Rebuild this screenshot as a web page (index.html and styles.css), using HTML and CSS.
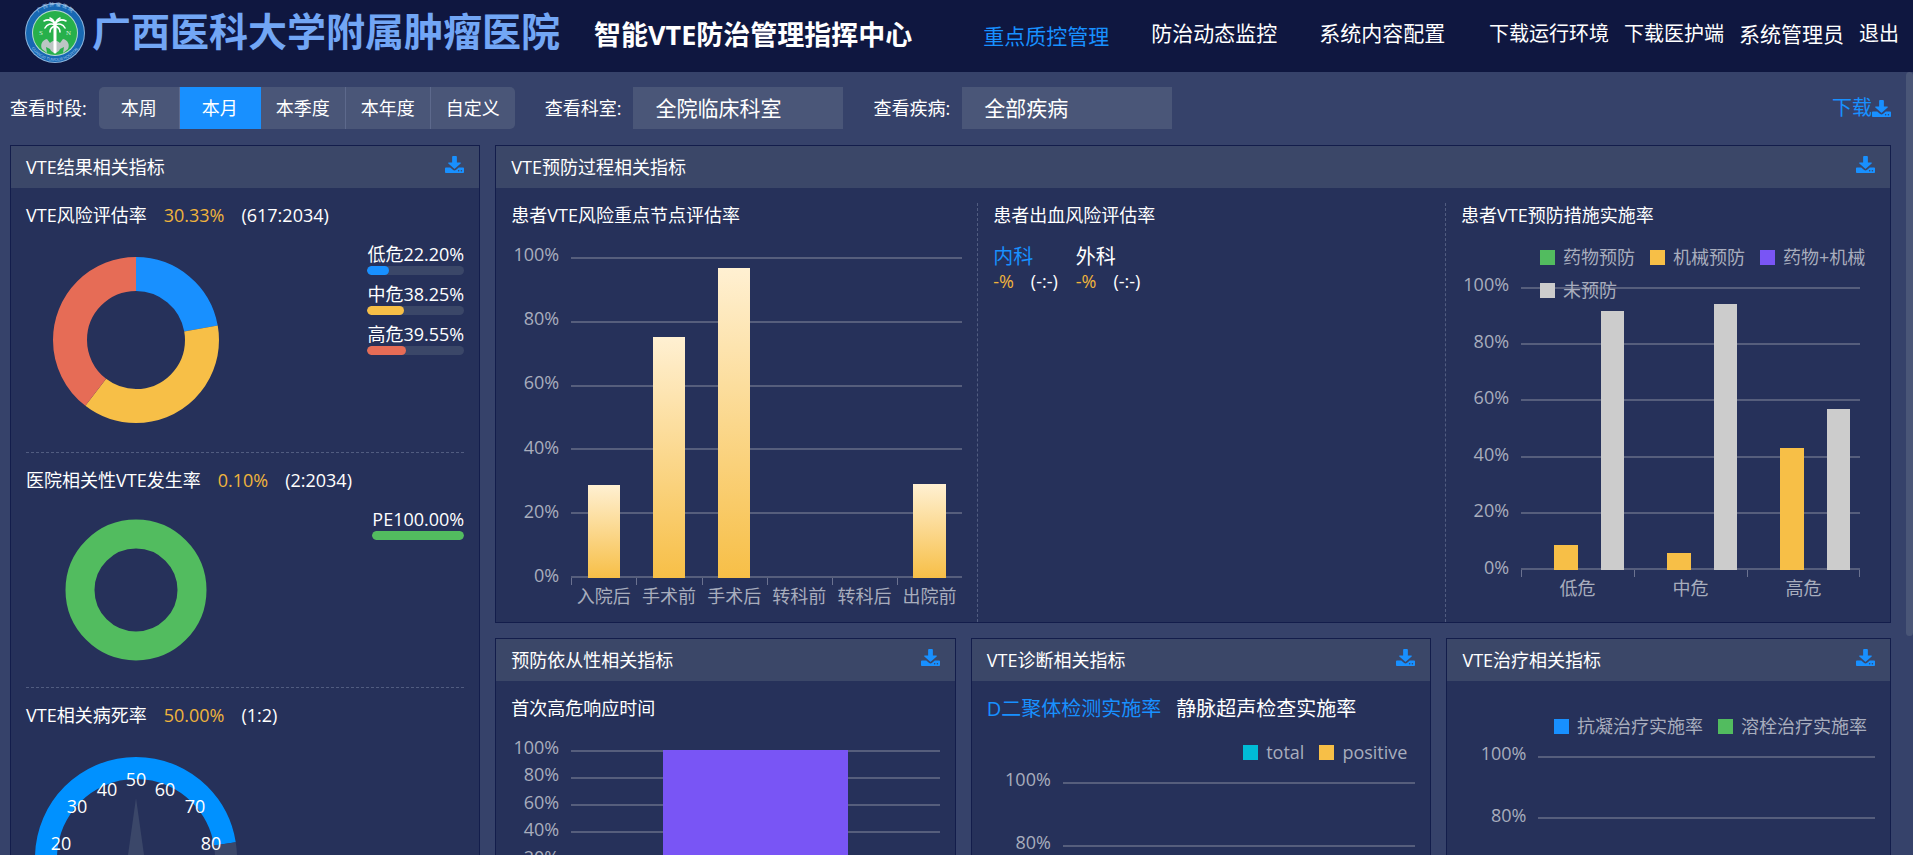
FILE: index.html
```html
<!DOCTYPE html>
<html lang="zh-CN">
<head>
    <meta charset="UTF-8">
    <meta name="viewport" content="width=device-width, initial-scale=1.0">
    <title>智能VTE防治管理指挥中心</title>
    <link rel="stylesheet" href="styles.css">
</head>
<body>
    <svg class="defs" aria-hidden="true">
        <symbol id="icon-download" viewBox="0 0 512 512" preserveAspectRatio="none">
            <path d="M216 0h80c13.300 0 24 10.700 24 24v168h87.700c17.800 0 26.700 21.500 14.100 34.100L269.700 378.300c-7.500 7.500-19.800 7.500-27.300 0L90.100 226.100c-12.600-12.600-3.700-34.100 14.100-34.100H192V24c0-13.300 10.700-24 24-24zm296 346v142c0 13.300-10.700 24-24 24H24c-13.300 0-24-10.700-24-24V370c0-13.300 10.700-24 24-24h116.700l79 79c20.100 20.100 52.500 20.100 72.600 0l79-79H488c13.300 0 24 10.700 24 24zm-124 98c0-11-9-20-20-20s-20 9-20 20 9 20 20 20 20-9 20-20zm74 0c0-11-9-20-20-20s-20 9-20 20 9 20 20 20 20-9 20-20z"/>
        </symbol>
    </svg>

    <header class="header">
        <div class="brand">
            <svg class="logo" viewBox="0 0 60 60" aria-hidden="true">
                <circle cx="30" cy="30" r="30" fill="#8cb4dc"/>
                <circle cx="30" cy="30" r="29" fill="#1768b3"/>
                <circle cx="30" cy="30" r="23" fill="#b9dcd0"/>
                <circle cx="30" cy="30" r="22" fill="#27b04b"/>
                <path id="ring-top" d="M6 27a24 24 0 0 1 48 0" fill="none"/>
                <path id="ring-bottom" d="M2 30a28 28 0 0 0 56 0" fill="none"/>
                <text class="ring-text" text-anchor="middle"><textPath href="#ring-top" startOffset="50%">广 西 肿 瘤 医 院</textPath></text>
                <text class="ring-text small" text-anchor="middle"><textPath href="#ring-bottom" startOffset="50%">GUANGXI TUMOUR HOSPITAL</textPath></text>
                <path d="M22 36c-5 1-7 6-5 10l5 4-1-6 4 2c2 5 8 5 10 0l4-2-1 6 5-4c2-4 0-9-5-10l-3 4c-3-3-7-3-10 0z" fill="#bcc6c4"/>
                <g fill="none" stroke="#fff" stroke-linecap="round">
                    <path d="M30 20v29" stroke-width="3"/>
                    <path d="M30 21c-3-4-7-5-11-3M30 21c3-4 7-5 11-3M30 22c-4-2-8-1-10 3M30 22c4-2 8-1 10 3M30 21c-1-3-2-5-5-6M30 21c1-3 2-5 5-6M30 23c-3 1-5 3-5 6M30 23c3 1 5 3 5 6" stroke-width="1.6"/>
                </g>
                <text class="logo-mark" x="14" y="32">S</text>
                <text class="logo-mark" x="41" y="32">N</text>
            </svg>
            <span class="hospital">广西医科大学附属肿瘤医院</span>
        </div>
        <h1 class="system-name">智能VTE防治管理指挥中心</h1>
        <nav class="nav">
            <a href="#" class="active">重点质控管理</a>
            <a href="#">防治动态监控</a>
            <a href="#">系统内容配置</a>
        </nav>
        <div class="user-links">
            <a href="#">下载运行环境</a>
            <a href="#">下载医护端</a>
            <a href="#" class="user">系统管理员</a>
            <a href="#">退出</a>
        </div>
    </header>

    <div class="page">
        <main class="content">
            <div class="toolbar">
                <span class="label">查看时段:</span>
                <div class="periods">
                    <button type="button">本周</button>
                    <button type="button" class="active">本月</button>
                    <button type="button">本季度</button>
                    <button type="button">本年度</button>
                    <button type="button">自定义</button>
                </div>
                <label class="label" for="dept">查看科室:</label>
                <select id="dept"><option>全院临床科室</option></select>
                <label class="label" for="disease">查看疾病:</label>
                <select id="disease"><option>全部疾病</option></select>
                <a href="#" class="download-all">下载<svg class="icon" aria-hidden="true"><use href="#icon-download"/></svg></a>
            </div>

            <div class="board">
                <section class="panel">
                    <div class="panel-head">
                        <h2>VTE结果相关指标</h2>
                        <button type="button" class="download" aria-label="下载"><svg class="icon"><use href="#icon-download"/></svg></button>
                    </div>
                    <div class="panel-body">
                        <div class="result">
                            <h3>VTE风险评估率<span class="rate">30.33%</span><span>(617:2034)</span></h3>
                            <div class="result-row">
                                <div class="figure">
                                    <svg width="166" height="166" viewBox="-83 -83 166 166">
                                        <g fill="none" stroke-width="34" transform="rotate(-90)">
                                            <circle r="66" pathLength="100" stroke="#1890ff" stroke-dasharray="22.2 77.8"/>
                                            <circle r="66" pathLength="100" stroke="#f7bf47" stroke-dasharray="38.25 61.75" stroke-dashoffset="-22.2"/>
                                            <circle r="66" pathLength="100" stroke="#e66c56" stroke-dasharray="39.55 60.45" stroke-dashoffset="-60.45"/>
                                        </g>
                                    </svg>
                                </div>
                                <ul class="shares">
                                    <li>低危22.20%<div class="track"><div class="fill blue" style="width: 22.2%"></div></div></li>
                                    <li>中危38.25%<div class="track"><div class="fill yellow" style="width: 38.25%"></div></div></li>
                                    <li>高危39.55%<div class="track"><div class="fill red" style="width: 39.55%"></div></div></li>
                                </ul>
                            </div>
                        </div>
                        <div class="result">
                            <h3>医院相关性VTE发生率<span class="rate">0.10%</span><span>(2:2034)</span></h3>
                            <div class="result-row short">
                                <div class="figure">
                                    <svg width="142" height="142" viewBox="-71 -71 142 142">
                                        <circle r="56" fill="none" stroke="#52bc5f" stroke-width="29"/>
                                    </svg>
                                </div>
                                <ul class="shares">
                                    <li>PE100.00%<div class="track"><div class="fill green" style="width: 100%"></div></div></li>
                                </ul>
                            </div>
                        </div>
                        <div class="result">
                            <h3>VTE相关病死率<span class="rate">50.00%</span><span>(1:2)</span></h3>
                            <div class="result-row tall">
                                <div class="figure">
                                    <svg width="204" height="204" viewBox="-102 -102 204 204">
                                        <g fill="none" stroke-width="22" transform="rotate(135)">
                                            <circle r="90" pathLength="360" stroke="#0091ff" stroke-dasharray="216 144"/>
                                            <circle r="90" pathLength="360" stroke="#3b4769" stroke-dasharray="54 306" stroke-dashoffset="-216"/>
                                        </g>
                                        <path d="M0-60L9 4 0 12-9 4z" fill="#3b4769"/>
                                        <g class="gauge-text">
                                            <text x="-54" y="62">0</text>
                                            <text x="-72" y="30">10</text>
                                            <text x="-75" y="-8">20</text>
                                            <text x="-59" y="-45">30</text>
                                            <text x="-29" y="-62">40</text>
                                            <text x="0" y="-72">50</text>
                                            <text x="29" y="-62">60</text>
                                            <text x="59" y="-45">70</text>
                                            <text x="75" y="-8">80</text>
                                            <text x="72" y="30">90</text>
                                            <text x="54" y="62">100</text>
                                        </g>
                                    </svg>
                                </div>
                            </div>
                        </div>
                    </div>
                </section>

                <div class="side">
                    <section class="panel">
                        <div class="panel-head">
                            <h2>VTE预防过程相关指标</h2>
                            <button type="button" class="download" aria-label="下载"><svg class="icon"><use href="#icon-download"/></svg></button>
                        </div>
                        <div class="panel-body process">
                            <div class="col">
                                <h3>患者VTE风险重点节点评估率</h3>
                                <div class="chart nodes">
                                    <div class="y-axis"><span>100%</span><span>80%</span><span>60%</span><span>40%</span><span>20%</span><span>0%</span></div>
                                    <div class="plot">
                                        <div class="lines"><i></i><i></i><i></i><i></i><i></i><i></i></div>
                                        <div class="bars">
                                            <div class="group"><div class="bar amber" style="height: 29%"></div></div>
                                            <div class="group"><div class="bar amber" style="height: 75%"></div></div>
                                            <div class="group"><div class="bar amber" style="height: 96.5%"></div></div>
                                            <div class="group"><div class="bar amber" style="height: 0%"></div></div>
                                            <div class="group"><div class="bar amber" style="height: 0%"></div></div>
                                            <div class="group"><div class="bar amber" style="height: 29.3%"></div></div>
                                        </div>
                                    </div>
                                    <ul class="x-axis"><li>入院后</li><li>手术前</li><li>手术后</li><li>转科前</li><li>转科后</li><li>出院前</li></ul>
                                </div>
                            </div>
                            <div class="col">
                                <h3>患者出血风险评估率</h3>
                                <div class="bleeding">
                                    <div>
                                        <a href="#" class="tab active">内科</a>
                                        <p><span class="rate">-%</span><span>(-:-)</span></p>
                                    </div>
                                    <div>
                                        <a href="#" class="tab">外科</a>
                                        <p><span class="rate">-%</span><span>(-:-)</span></p>
                                    </div>
                                </div>
                            </div>
                            <div class="col">
                                <h3>患者VTE预防措施实施率</h3>
                                <div class="chart measures">
                                    <ul class="legend over">
                                        <li><i class="green"></i>药物预防</li>
                                        <li><i class="yellow"></i>机械预防</li>
                                        <li><i class="purple"></i>药物+机械</li>
                                        <li><i class="grey"></i>未预防</li>
                                    </ul>
                                    <div class="y-axis"><span>100%</span><span>80%</span><span>60%</span><span>40%</span><span>20%</span><span>0%</span></div>
                                    <div class="plot">
                                        <div class="lines"><i></i><i></i><i></i><i></i><i></i><i></i></div>
                                        <div class="bars">
                                            <div class="group">
                                                <div class="bar green" style="height: 0%"></div>
                                                <div class="bar yellow" style="height: 9%"></div>
                                                <div class="bar purple" style="height: 0%"></div>
                                                <div class="bar grey" style="height: 91.5%"></div>
                                            </div>
                                            <div class="group">
                                                <div class="bar green" style="height: 0%"></div>
                                                <div class="bar yellow" style="height: 6%"></div>
                                                <div class="bar purple" style="height: 0%"></div>
                                                <div class="bar grey" style="height: 94%"></div>
                                            </div>
                                            <div class="group">
                                                <div class="bar green" style="height: 0%"></div>
                                                <div class="bar yellow" style="height: 43%"></div>
                                                <div class="bar purple" style="height: 0%"></div>
                                                <div class="bar grey" style="height: 57%"></div>
                                            </div>
                                        </div>
                                    </div>
                                    <ul class="x-axis"><li>低危</li><li>中危</li><li>高危</li></ul>
                                </div>
                            </div>
                        </div>
                    </section>

                    <div class="bottom">
                        <section class="panel">
                            <div class="panel-head">
                                <h2>预防依从性相关指标</h2>
                                <button type="button" class="download" aria-label="下载"><svg class="icon"><use href="#icon-download"/></svg></button>
                            </div>
                            <div class="panel-body">
                                <h3>首次高危响应时间</h3>
                                <div class="chart response">
                                    <div class="y-axis"><span>100%</span><span>80%</span><span>60%</span><span>40%</span><span>20%</span><span>0%</span></div>
                                    <div class="plot">
                                        <div class="lines"><i></i><i></i><i></i><i></i><i></i><i></i></div>
                                        <div class="bars"><div class="group"><div class="bar purple" style="height: 100%"></div></div></div>
                                    </div>
                                </div>
                            </div>
                        </section>
                        <section class="panel">
                            <div class="panel-head">
                                <h2>VTE诊断相关指标</h2>
                                <button type="button" class="download" aria-label="下载"><svg class="icon"><use href="#icon-download"/></svg></button>
                            </div>
                            <div class="panel-body">
                                <div class="tabs">
                                    <a href="#" class="tab active">D二聚体检测实施率</a>
                                    <a href="#" class="tab">静脉超声检查实施率</a>
                                </div>
                                <ul class="legend">
                                    <li><i class="cyan"></i>total</li>
                                    <li><i class="yellow"></i>positive</li>
                                </ul>
                                <div class="chart indent">
                                    <div class="y-axis"><span>100%</span><span>80%</span><span>60%</span><span>40%</span><span>20%</span><span>0%</span></div>
                                    <div class="plot"><div class="lines"><i></i><i></i><i></i><i></i><i></i><i></i></div></div>
                                </div>
                            </div>
                        </section>
                        <section class="panel">
                            <div class="panel-head">
                                <h2>VTE治疗相关指标</h2>
                                <button type="button" class="download" aria-label="下载"><svg class="icon"><use href="#icon-download"/></svg></button>
                            </div>
                            <div class="panel-body">
                                <ul class="legend">
                                    <li><i class="blue"></i>抗凝治疗实施率</li>
                                    <li><i class="green"></i>溶栓治疗实施率</li>
                                </ul>
                                <div class="chart indent treatment">
                                    <div class="y-axis"><span>100%</span><span>80%</span><span>60%</span><span>40%</span><span>20%</span><span>0%</span></div>
                                    <div class="plot"><div class="lines"><i></i><i></i><i></i><i></i><i></i><i></i></div></div>
                                </div>
                            </div>
                        </section>
                    </div>
                </div>
            </div>
        </main>
        <div class="scrollbar" aria-hidden="true"><div class="thumb"></div></div>
    </div>
</body>
</html>
```
FILE: styles.css
```css
* {
    box-sizing: border-box;
}

body {
    display: flex;
    flex-direction: column;
    height: 100vh;
    margin: 0;
    overflow: hidden;
    font-family: "Open Sans", "Noto Sans CJK SC", sans-serif;
    font-size: 18px;
    line-height: 26px;
    color: #fff;
    background-color: #36426a;
}

h1, h2, h3, p, ul {
    margin: 0;
    padding: 0;
    font-size: inherit;
    font-weight: normal;
    list-style: none;
}

h3 {
    padding-bottom: 2px;
    line-height: 24px;
}

a {
    color: inherit;
    text-decoration: none;
}

button, select {
    font: inherit;
    color: inherit;
    border: none;
    cursor: pointer;
}

.defs {
    display: none;
}

.icon {
    display: block;
    width: 19px;
    height: 17px;
    fill: #1890ff;
}

/* header */
.header {
    display: flex;
    align-items: center;
    flex: none;
    height: 72px;
    padding: 0 14px 0 25px;
    background-color: #0f1740;
    white-space: nowrap;
}

.brand {
    display: flex;
    align-items: center;
    gap: 7px;
    padding-bottom: 6px;
}

.logo {
    width: 60px;
    height: 60px;
    overflow: visible;
}

.ring-text {
    font-size: 5px;
    fill: #a9cdf0;
}

.ring-text.small {
    font-size: 4px;
}

.logo-mark {
    font-family: "Liberation Serif", serif;
    font-size: 7px;
    fill: #d3efd9;
}

.hospital {
    padding-bottom: 4px;
    font-size: 39px;
    line-height: 56px;
    font-weight: bold;
    color: #72a6f5;
}

.system-name {
    margin-left: 34px;
    padding-bottom: 2px;
    font-size: 27px;
    line-height: 40px;
    font-weight: bold;
}

.nav {
    display: flex;
    gap: 42px;
    margin-left: 71px;
    padding-bottom: 4px;
    font-size: 21px;
    line-height: 30px;
}

.nav .active {
    padding-top: 3px;
}

.active {
    color: #1890ff;
}

.user-links {
    display: flex;
    gap: 15px;
    margin-left: auto;
    font-size: 20px;
    line-height: 30px;
    padding-bottom: 4px;
}

.user-links .user {
    font-size: 21px;
}

/* page */
.page {
    display: flex;
    flex: 1;
    min-height: 0;
}

.content {
    flex: 1;
    min-width: 0;
    padding: 15px 15px 15px 10px;
    overflow-y: auto;
    scrollbar-width: none;
}

.scrollbar {
    width: 7px;
}

.thumb {
    height: 72%;
    border-radius: 4px;
    background-color: #4a5677;
}

.toolbar {
    display: flex;
    align-items: center;
    height: 42px;
    margin-bottom: 16px;
    white-space: nowrap;
}

.label {
    margin-right: 12px;
}

.periods {
    display: flex;
    height: 100%;
    margin-right: 30px;
    border-radius: 5px;
    overflow: hidden;
}

.periods button {
    min-width: 81px;
    padding: 0 15px;
    background-color: #4a5678;
    border-right: 1px solid #5d698c;
}

.periods button:last-child {
    border-right: none;
}

.periods .active {
    color: #fff;
    background-color: #1890ff;
    border-color: #1890ff;
}

.toolbar select {
    appearance: none;
    width: 210px;
    height: 100%;
    margin-right: 30px;
    padding: 0 22px;
    font-size: 21px;
    border-radius: 0;
    background-color: #4a5678;
}

.download-all {
    display: flex;
    align-items: center;
    margin-left: auto;
    font-size: 20px;
    color: #1890ff;
}

/* panels */
.board {
    display: grid;
    grid-template-columns: 25% 1fr;
    gap: 15px;
}

.side {
    min-width: 0;
}

.bottom {
    display: grid;
    grid-template-columns: 33% 33% 1fr;
    gap: 15px;
    margin-top: 15px;
}

.panel {
    min-width: 0;
    border: 1px solid #131d4b;
    background-color: #26315a;
}

.panel-head {
    display: flex;
    align-items: center;
    justify-content: space-between;
    height: 42px;
    padding: 0 15px;
    background-color: #3b4768;
}

.download {
    padding: 0 0 5px;
    background: none;
}

.panel-body {
    padding: 15px;
}

.rate {
    color: #f0b43c;
}

h3 .rate {
    margin: 0 17px;
}

/* results column */
.result {
    margin-bottom: 15px;
    border-bottom: 1px dashed #515c80;
}

.result:last-child {
    border-bottom: none;
}

.result-row {
    display: flex;
    height: 223px;
}

.result-row.short {
    height: 193px;
}

.result-row.tall {
    height: 258px;
}

.figure {
    display: flex;
    align-items: center;
    justify-content: center;
    width: 50%;
    padding-bottom: 2px;
}

.tall .figure {
    padding-bottom: 0;
}

.gauge-text {
    fill: #fff;
    text-anchor: middle;
}

.shares {
    margin: 13px 0 0 auto;
    line-height: 24px;
}

.shares li {
    margin-bottom: 7px;
}

.track {
    height: 9px;
    border-radius: 5px;
    background-color: #3b4768;
    overflow: hidden;
}

.fill {
    height: 100%;
    border-radius: 5px;
}

.blue { background-color: #1890ff; }
.yellow { background-color: #f7bf47; }
.red { background-color: #e66c56; }
.green { background-color: #52bc5f; }
.purple { background-color: #7955f5; }
.grey { background-color: #ccc; }
.cyan { background-color: #00bcd6; }
.amber { background-image: linear-gradient(#fff0d2, #f7bf47); }

/* process panel */
.process {
    display: grid;
    grid-template-columns: 466fr 468fr 430fr;
    padding-bottom: 0;
}

.col {
    min-width: 0;
    padding: 0 15px;
    border-left: 1px dashed #515c80;
}

.col:first-child {
    padding-left: 0;
    border-left: none;
}

.col:last-child {
    padding-right: 0;
}

.bleeding {
    display: flex;
    gap: 18px;
    margin-top: 15px;
}

.bleeding p {
    display: flex;
    gap: 17px;
    line-height: 22px;
}

.tab {
    font-size: 20px;
}

.tabs {
    display: flex;
    gap: 15px;
}

/* charts */
.chart {
    position: relative;
    display: grid;
    grid-template-columns: 48px 1fr;
    grid-template-rows: 317px auto;
    column-gap: 12px;
    padding-bottom: 15px;
    color: #a8adbd;
}

.chart.nodes {
    grid-template-rows: 321px auto;
    margin-top: 28px;
}

.chart.measures {
    grid-template-rows: 283px auto;
    margin-top: 58px;
    padding-right: 15px;
}

.chart.response {
    grid-template-rows: 137px auto;
    margin-top: 28px;
}

.chart.indent {
    margin-top: 20px;
    padding-left: 16px;
}

.chart.treatment {
    grid-template-rows: 309px auto;
}

/* labels sit a little above their grid line */
.y-axis {
    display: flex;
    flex-direction: column;
    justify-content: space-between;
    margin: -13px 0 -7px;
    line-height: 20px;
    text-align: right;
}

.plot {
    display: grid;
}

.lines, .bars {
    grid-area: 1 / 1;
    display: flex;
}

.lines {
    flex-direction: column;
    justify-content: space-between;
}

.lines i {
    height: 2px;
    background-color: #565e7c;
}

.group {
    display: flex;
    flex: 1;
    align-items: flex-end;
    justify-content: center;
}

.bar {
    width: 50%;
}

.measures .group {
    padding: 0 10px;
}

.measures .bar {
    width: 25%;
}

.x-axis {
    grid-column: 2;
    display: flex;
    line-height: 22px;
    text-align: center;
    white-space: nowrap;
}

.x-axis li {
    flex: 1;
}

.x-axis li::before {
    content: "";
    display: block;
    height: 7px;
    border-left: 1px solid #6b7290;
}

.measures .x-axis li:last-child::before {
    border-right: 1px solid #6b7290;
}

.legend {
    display: flex;
    flex-wrap: wrap;
    justify-content: flex-end;
    gap: 13px 15px;
    margin-top: 20px;
    padding-right: 8px;
    line-height: 20px;
    color: #a8adbd;
}

.legend li {
    display: flex;
    align-items: center;
    gap: 8px;
}

.legend i {
    width: 15px;
    height: 15px;
}

.legend.over {
    position: absolute;
    top: -40px;
    left: 79px;
    right: 0;
    z-index: 1;
    justify-content: flex-start;
    margin-top: 0;
    padding-right: 0;
}
```
